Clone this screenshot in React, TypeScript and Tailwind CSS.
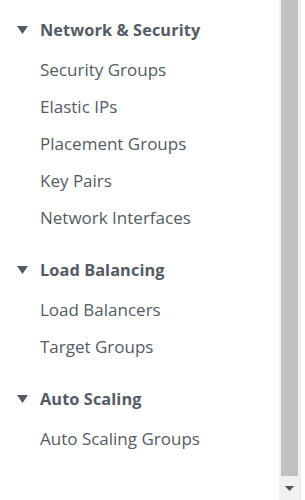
const sections = [
  {
    title: "Network & Security",
    items: ["Security Groups", "Elastic IPs", "Placement Groups", "Key Pairs", "Network Interfaces"],
  },
  {
    title: "Load Balancing",
    items: ["Load Balancers", "Target Groups"],
  },
  {
    title: "Auto Scaling",
    items: ["Auto Scaling Groups"],
  },
];

function Caret() {
  return (
    <svg className="h-[8px] w-[11px]" viewBox="0 0 11 8" fill="#545b64">
      <path d="M0 0h11L5.5 8z" />
    </svg>
  );
}

export default function App() {
  return (
    <div className="flex h-[500px] w-[305px] overflow-hidden bg-white font-['Open_Sans',sans-serif] text-[#545b64]">
      <nav className="flex-1 pt-[11px]">
        {sections.map((section) => (
          <div key={section.title} className="mb-[15px]">
            <div className="flex h-[38px] items-center">
              <span className="flex w-[40px] pl-[17px]">
                <Caret />
              </span>
              <span className="text-[16.3px] font-bold tracking-[0.1px]">{section.title}</span>
            </div>
            <ul className="mt-[2px]">
              {section.items.map((item) => (
                <li key={item} className="flex h-[37px] items-center pl-[40px] text-[17px]">
                  {item}
                </li>
              ))}
            </ul>
          </div>
        ))}
      </nav>
      <div className="flex w-[21px] flex-col bg-[#f1f1f1] px-[2px]">
        <div className="h-[476px] bg-[#c1c1c1]" />
        <div className="flex flex-1 items-center justify-center">
          <svg className="h-[5px] w-[9px]" viewBox="0 0 9 5" fill="#505050">
            <path d="M0 0h9L4.5 5z" />
          </svg>
        </div>
      </div>
      <div className="w-[5px] border-l border-[#e8e8e8] bg-white" />
    </div>
  );
}
